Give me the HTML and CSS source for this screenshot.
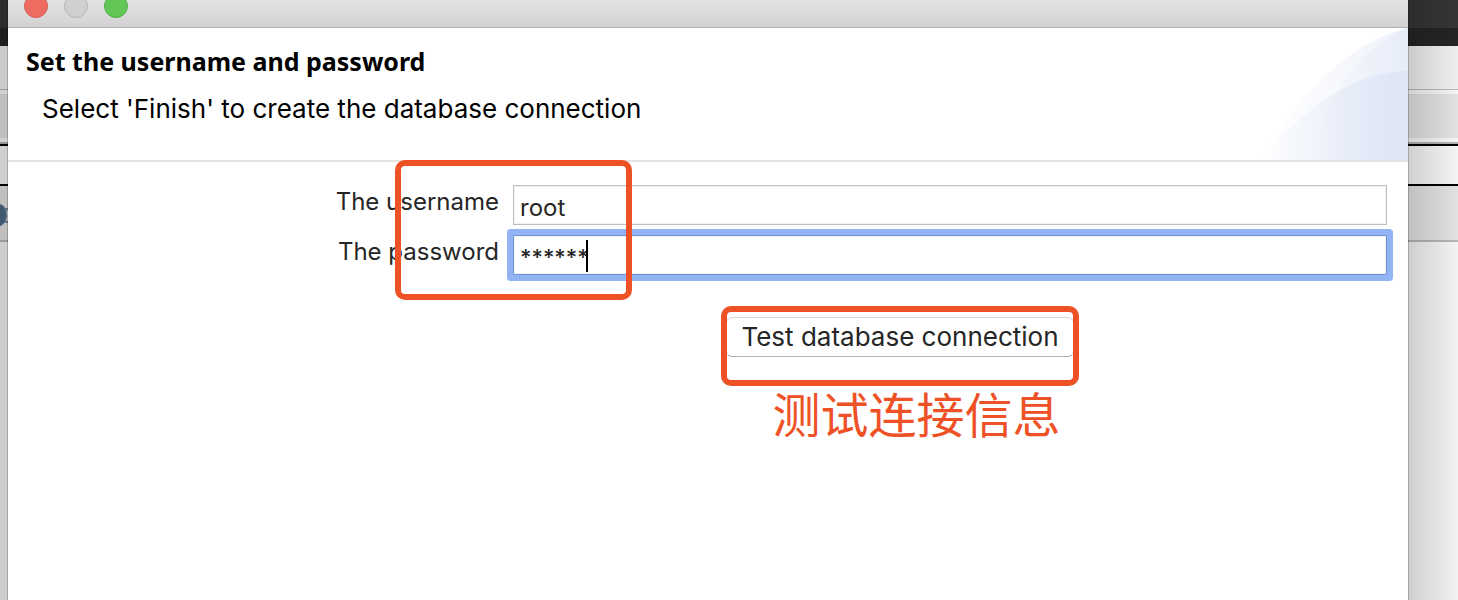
FILE: index.html
```html
<!DOCTYPE html>
<html lang="en">
<head>
<meta charset="utf-8">
<title>Set the username and password</title>
<link rel="stylesheet" href="styles.css">
</head>
<body>
<div class="backdrop" aria-hidden="true">
  <div class="menu"></div>
  <div class="menu-low"></div>
  <div class="title"></div>
  <div class="tools"></div>
  <div class="tabs"></div>
  <div class="view">
    <svg class="view-icon" viewBox="0 0 8 26" width="8" height="26"><path d="M0 2C5 4 7 8 6 13C6 18 4 23 0 24Z" fill="#4d6b88"/><path d="M8 7H5C7 10 7 16 5 20H8" fill="none" stroke="#5f7a94" stroke-width="1.5"/><path d="M7 10C8 12 8 16 7 18" fill="none" stroke="#fff" stroke-width="1.5"/></svg>
  </div>
  <div class="page"></div>
</div>
<main class="window">
  <div class="titlebar">
    <button class="light close" type="button" aria-label="Close"></button>
    <button class="light minimize" type="button" aria-label="Minimize" disabled></button>
    <button class="light expand" type="button" aria-label="Zoom"></button>
  </div>
  <header class="banner">
    <div class="banner-text">
      <h1>Set the username and password</h1>
      <p>Select 'Finish' to create the database connection</p>
    </div>
    <svg class="swoosh" viewBox="0 0 148 132" aria-hidden="true">
      <defs>
        <linearGradient id="a"><stop offset="0" stop-color="#dfe6f6" stop-opacity="0"/><stop offset="1" stop-color="#dfe6f6" stop-opacity=".5"/></linearGradient>
        <linearGradient id="b"><stop offset="0" stop-color="#dbe4f5" stop-opacity="0"/><stop offset="1" stop-color="#dbe4f5" stop-opacity=".4"/></linearGradient>
        <linearGradient id="c"><stop offset="0" stop-color="#d8e1f4" stop-opacity="0"/><stop offset=".9" stop-color="#d8e1f4" stop-opacity=".6"/><stop offset="1" stop-color="#d8e1f4" stop-opacity=".6"/></linearGradient>
      </defs>
      <path d="M0 132C35 75 84 14 148 0V132Z" fill="url(#a)"/>
      <path d="M50 132C66 70 98 18 148 0V132Z" fill="url(#b)"/>
      <path d="M0 132C38 88 88 43 148 43V132Z" fill="url(#c)"/>
    </svg>
  </header>
  <form class="form">
    <label for="username">The username</label>
    <div class="field"><input id="username" type="text" value="root"></div>
    <label for="password">The password</label>
    <div class="field focused"><input id="password" type="text" value="******" autocomplete="off"><span class="caret"></span></div>
    <div class="mark mark-fields"></div>
    <div class="action">
      <div class="test">
        <button class="test-button" type="button">Test database connection</button>
        <div class="mark mark-button"></div>
      </div>
      <p class="note" lang="zh-CN">测试连接信息</p>
    </div>
  </form>
</main>
</body>
</html>
```
FILE: styles.css
```css
* { box-sizing: border-box; }
body {
  margin: 0;
  min-height: 100vh;
  display: flex;
  font-family: Inter, "Liberation Sans", sans-serif;
  color: #262626;
}
h1, p { margin: 0; }

.backdrop {
  position: absolute;
  inset: 0;
  display: flex;
  flex-direction: column;
}
/* shade cast by the window on both sides */
.backdrop::after {
  content: "";
  position: absolute;
  inset: 0;
  background: linear-gradient(to left, rgba(0, 0, 0, .02), rgba(0, 0, 0, .17) 50px);
}
.menu { height: 28px; background: #363636; }
.menu-low { height: 18px; background: #252525; }
.title { height: 44px; background: #f4f4f4; border-bottom: 1px solid #bbb; }
.tools {
  height: 52px;
  margin-bottom: 2px;
  background: #e6e6e6;
  border: solid #fafafa;
  border-width: 4px 0;
  box-shadow: 0 2px #b4b4b4;
}
.tabs { height: 42px; background: #fafafa; border: solid #000; border-width: 2px 0; }
.view { height: 56px; background: #e6e6e6; border-bottom: 2px solid #b8b8b8; padding-top: 16px; }
.view-icon { display: block; }
.page { flex: 1; background: #f8f8f8; }

.window {
  position: relative;
  flex: 1;
  margin: 0 50px 0 8px;
  background: #fff;
  box-shadow: 0 0 0 1px rgba(0, 0, 0, .2);
}
.titlebar {
  display: flex;
  align-items: flex-end;
  gap: 16px;
  height: 28px;
  padding: 0 16px 9px;
  overflow: hidden;
  background: linear-gradient(#e3e3e3, #d2d2d2);
  border-bottom: 1px solid #b0b0b0;
}
.light {
  flex: none;
  width: 24px;
  height: 24px;
  padding: 0;
  border: 1px solid;
  border-radius: 50%;
}
.close { background: #ed6b60; border-color: #dc5b50; }
.minimize { background: #d0d0d0; border-color: #b4b4b4; }
.expand { background: #62c655; border-color: #50b045; }

.banner {
  display: flex;
  justify-content: space-between;
  height: 134px;
  border-bottom: 2px solid #e4e4e4;
  color: #000;
}
.banner-text { padding: 15px 18px; }
.banner h1 {
  font: bold 25px/36px "Noto Sans", "Open Sans", sans-serif;
}
.banner p { margin: 12px 0 0 16px; font-size: 26px; line-height: 36px; }
.swoosh { width: 148px; height: 132px; }

.form {
  position: relative;
  display: grid;
  grid-template-columns: 491px 1fr;
  column-gap: 14px;
  row-gap: 10px;
  padding: 23px 21px 0 0;
  font-size: 24px;
}
.form label { text-align: right; line-height: 34px; }
.field { position: relative; }
.field input {
  display: block;
  width: 100%;
  height: 40px;
  padding: 4px 6px 0;
  border: 1px solid #bebebe;
  border-radius: 0;
  box-shadow: inset 0 0 0 1px #f2f2f2;
  background: #fff;
  color: inherit;
  font: inherit;
  outline: none;
}
.field.focused input {
  border-color: #6f94d6;
  box-shadow: 0 0 0 6px #92b4f4, inset 0 0 0 1px #f2f2f2;
  border-radius: 1px;
  font-size: 22px;
  font-weight: 500;
}
.caret {
  position: absolute;
  left: 73px;
  top: 5px;
  width: 2px;
  height: 32px;
  background: #000;
}
.mark {
  position: absolute;
  border: 6px solid #ee5126;
  border-radius: 10px;
  pointer-events: none;
}
.mark-fields { left: 387px; top: -2px; width: 237px; height: 140px; }
.action {
  grid-column: 2;
  justify-self: center;
  margin-top: 32px;
  margin-right: 100px;
}
.test { position: relative; }
.test-button {
  display: block;
  height: 40px;
  padding: 0 14px 1px;
  background: #fff;
  border: 1px solid #d8d8d8;
  border-bottom-color: #b0b0b0;
  border-radius: 6px;
  color: inherit;
  font: inherit;
  font-size: 26px;
  white-space: nowrap;
}
.mark-button { inset: -11px -5px -29px; }
.note {
  margin-top: 24px;
  padding-left: 46px;
  color: #ee5126;
  font: 48px/62px "Noto Sans CJK SC", sans-serif;
}
```
